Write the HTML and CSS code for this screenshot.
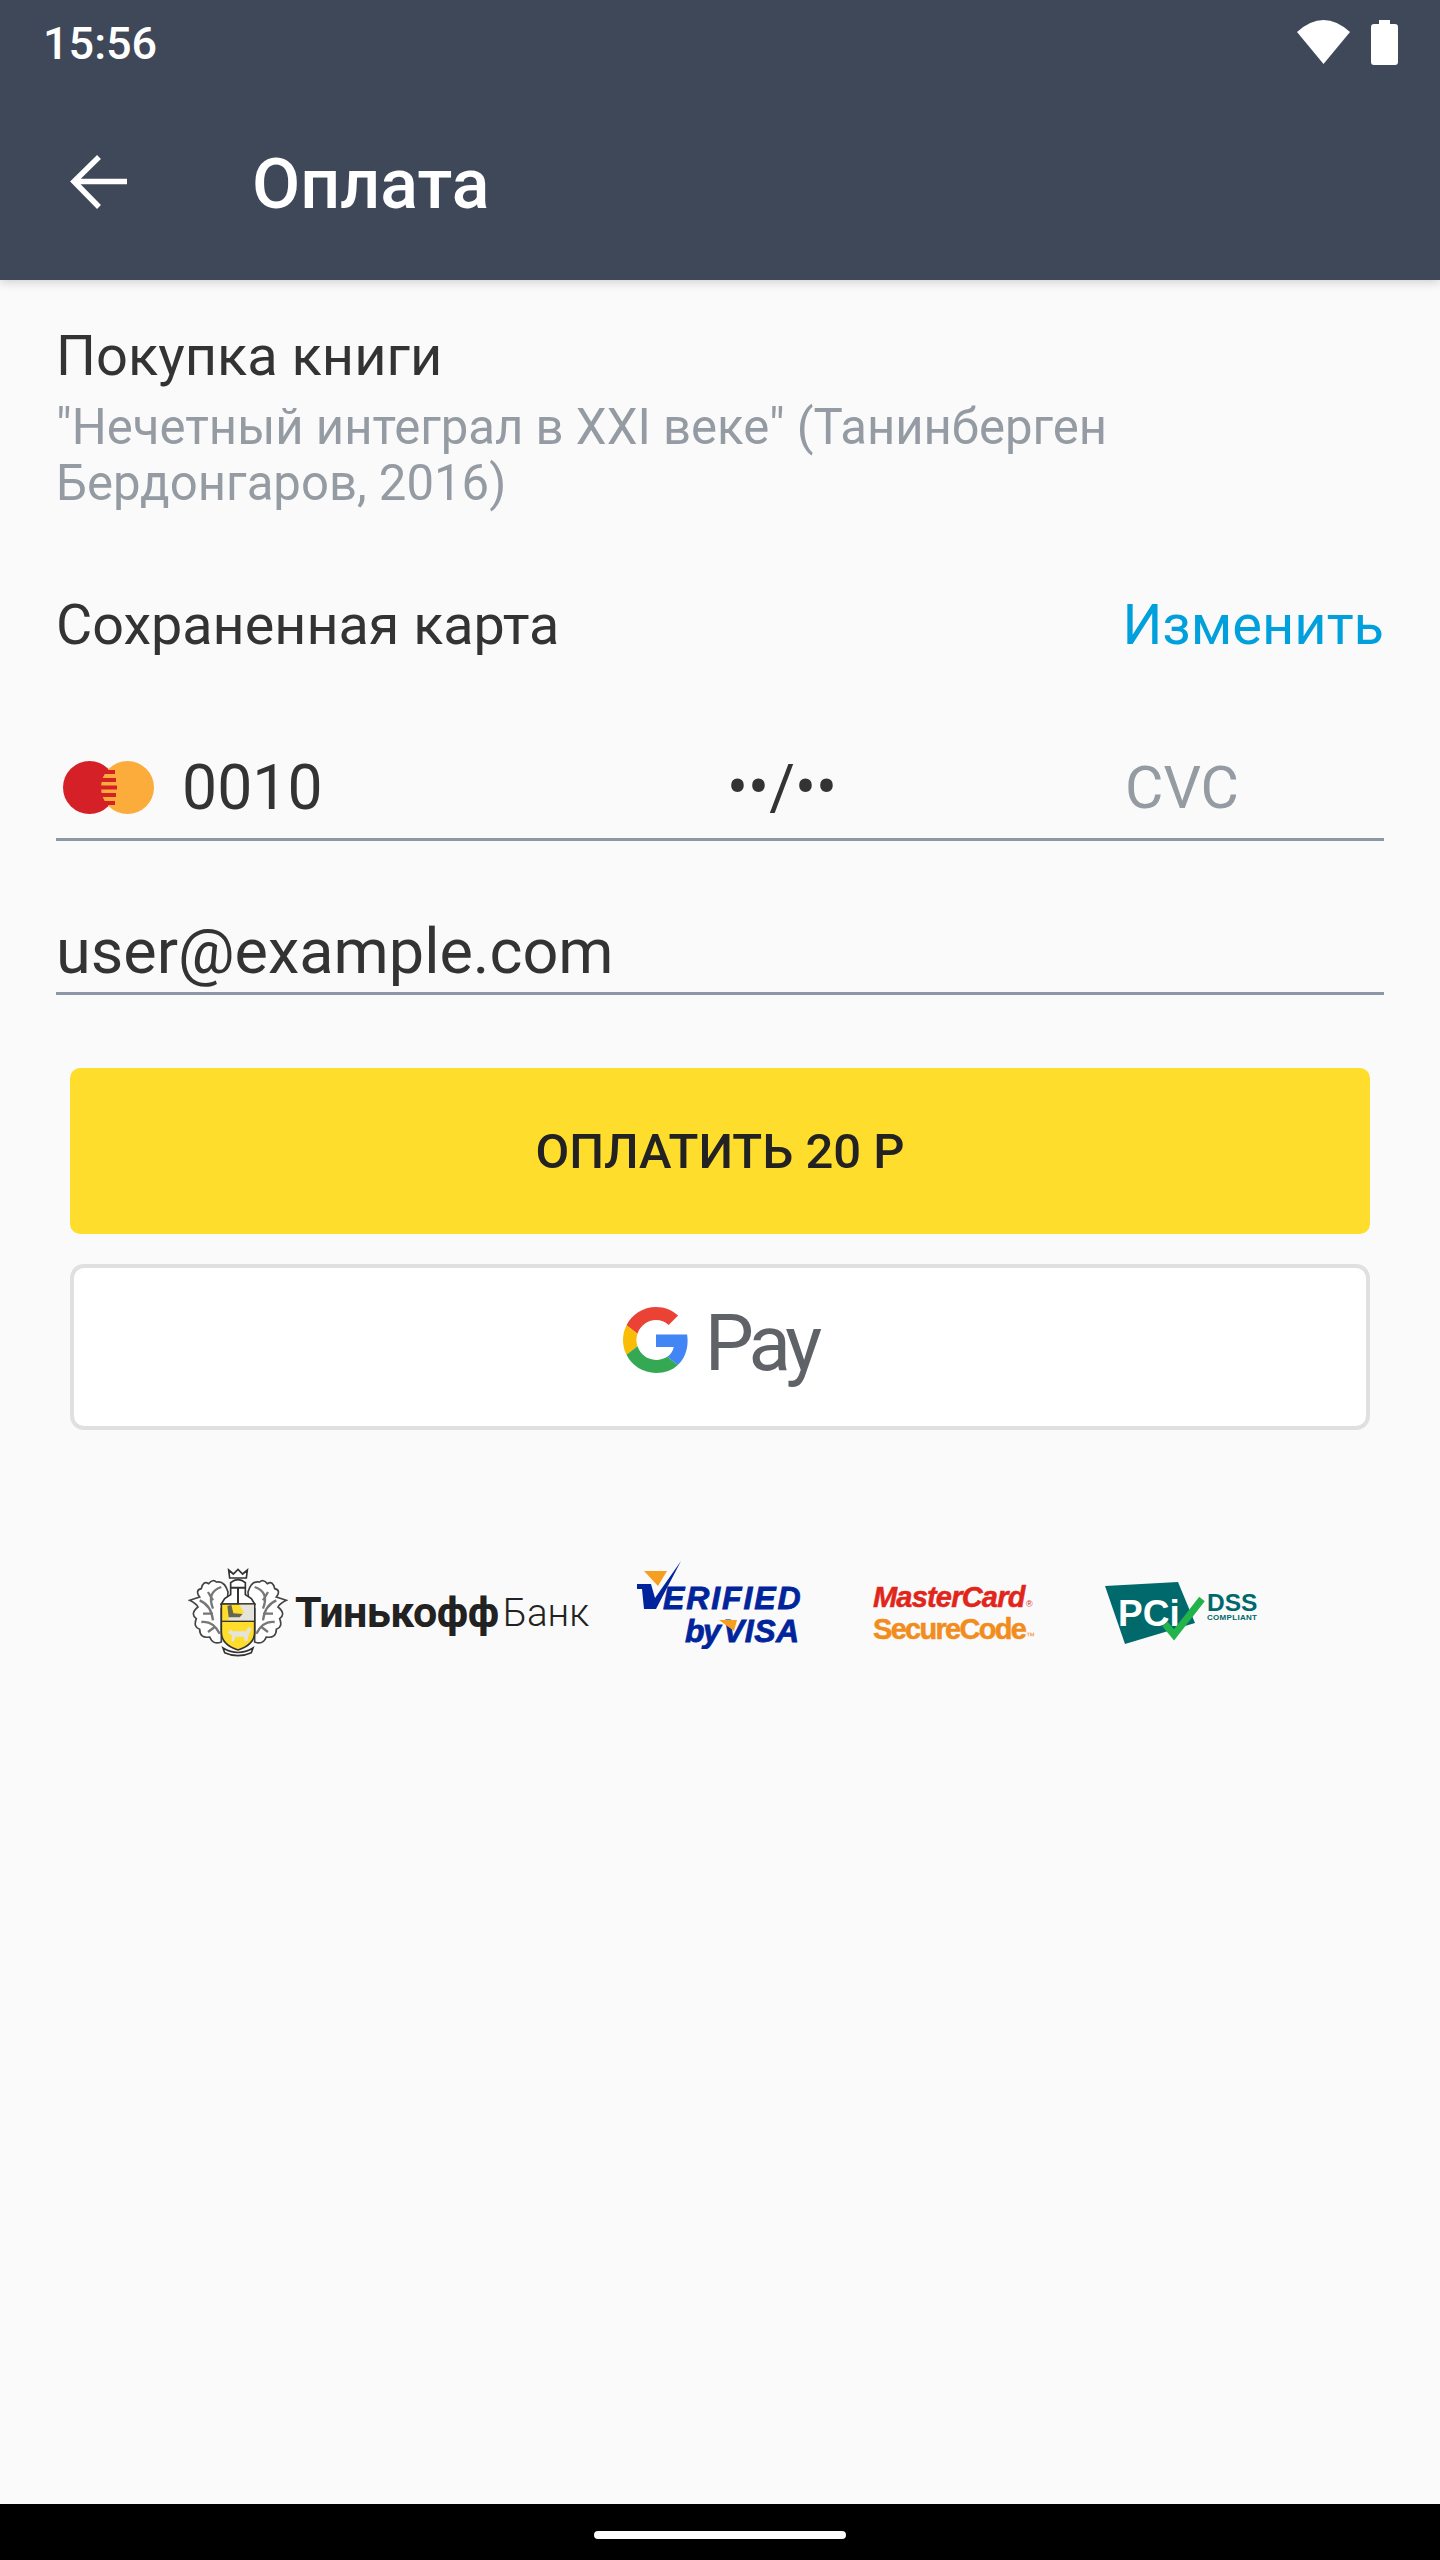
FILE: index.html
```html
<!DOCTYPE html>
<html lang="ru">
<head>
    <meta charset="UTF-8">
    <meta name="viewport" content="width=device-width, initial-scale=1.0">
    <title>Оплата</title>
    <link rel="stylesheet" href="styles.css">
</head>
<body>
    <div class="screen">
        <header class="header">
            <div class="status-bar">
                <span class="status-time">15:56</span>
                <div class="status-icons">
                    <svg class="icon-wifi" viewBox="0 0 53 44"><path d="M0 12Q26.500 -12 53 12L26.500 44Z"/></svg>
                    <svg class="icon-battery" viewBox="0 0 27 45"><path d="M8 0H19V4H24Q27 4 27 7V42Q27 45 24 45H3Q0 45 0 42V7Q0 4 3 4H8Z"/></svg>
                </div>
            </div>
            <div class="toolbar">
                <svg class="icon-back" viewBox="0 0 58 54"><path d="M57 26.500H5M29 2L4 26.500L29 52"/></svg>
                <h1 class="toolbar-title">Оплата</h1>
            </div>
        </header>

        <main class="content">
            <section class="purchase">
                <div class="purchase-title">Покупка книги</div>
                <div class="purchase-desc">"Нечетный интеграл в XXI веке" (Танинберген Бердонгаров, 2016)</div>
            </section>

            <div class="saved-row">
                <span>Сохраненная карта</span>
                <a class="saved-link">Изменить</a>
            </div>

            <div class="field card-field">
                <svg class="icon-mc" viewBox="0 0 91 53">
                    <circle class="mc-red" cx="26.500" cy="26.500" r="26.500"/>
                    <circle class="mc-orange" cx="64.500" cy="26.500" r="26.500"/>
                    <path class="mc-stripes" d="M40 11H52M38 19H53M37 26.500H54M38 34H53M40 42H52"/>
                </svg>
                <span class="card-number">0010</span>
                <span class="card-date">••/••</span>
                <span class="card-cvc">CVC</span>
            </div>

            <div class="field email-field">user@example.com</div>

            <div class="actions">
                <button class="btn btn-pay">ОПЛАТИТЬ 20 Р</button>
                <button class="btn btn-gpay">
                    <svg class="icon-g" viewBox="0 0 48 48">
                        <path fill="#EA4335" d="M24 9.500c3.540 0 6.710 1.220 9.210 3.600l6.850-6.850C35.900 2.380 30.470 0 24 0 14.620 0 6.510 5.380 2.560 13.220l7.980 6.190C12.430 13.720 17.740 9.500 24 9.500z"/>
                        <path fill="#4285F4" d="M46.980 24.550c0-1.570-.15-3.090-.38-4.550H24v9.020h12.940c-.58 2.960-2.260 5.480-4.780 7.180l7.730 6c4.510-4.180 7.090-10.360 7.090-17.650z"/>
                        <path fill="#FBBC05" d="M10.530 28.590c-.48-1.450-.76-2.990-.76-4.590s.27-3.140.76-4.590l-7.980-6.190C.92 16.460 0 20.120 0 24c0 3.880.92 7.540 2.560 10.780l7.970-6.190z"/>
                        <path fill="#34A853" d="M24 48c6.480 0 11.930-2.130 15.890-5.810l-7.730-6c-2.150 1.450-4.920 2.300-8.160 2.300-6.260 0-11.570-4.220-13.470-9.910l-7.980 6.190C6.510 42.620 14.620 48 24 48z"/>
                    </svg>
                    <span class="gpay-text">Pay</span>
                </button>
            </div>

            <div class="logos">
                <div class="logo-tinkoff">
                    <svg class="crest" viewBox="50 75 300 270">
                        <g class="crest-leaf">
                            <path d="M170 150Q160 115 135 120Q125 110 112 125Q95 115 90 140Q70 145 85 165L55 175Q75 185 80 195Q55 215 75 230Q65 255 85 262Q85 290 115 285Q125 310 150 300V200Q170 180 170 150Z"/>
                            <path class="crest-vein" d="M150 135Q105 150 125 200M85 175Q120 190 125 235M90 240Q125 235 145 275M110 150L125 175M95 215L125 215M110 270L130 255"/>
                        </g>
                        <g class="crest-leaf" transform="matrix(-1 0 0 1 400 0)">
                            <path d="M170 150Q160 115 135 120Q125 110 112 125Q95 115 90 140Q70 145 85 165L55 175Q75 185 80 195Q55 215 75 230Q65 255 85 262Q85 290 115 285Q125 310 150 300V200Q170 180 170 150Z"/>
                            <path class="crest-vein" d="M150 135Q105 150 125 200M85 175Q120 190 125 235M90 240Q125 235 145 275M110 150L125 175M95 215L125 215M110 270L130 255"/>
                        </g>
                        <path class="crest-crown" d="M172 84L186 96L200 82L214 96L228 84L225 108H175Z"/>
                        <path class="crest-knight" d="M178 122Q200 104 222 122V158L240 170L250 186H150L160 170L178 158Z"/>
                        <path class="crest-line" d="M178 137H222M200 137V186"/>
                        <path class="crest-shield" d="M150 186H250V270Q250 308 200 324Q150 308 150 270Z"/>
                        <path class="crest-white" d="M204 188H248V236H172V222Q205 226 218 212Z"/>
                        <path class="crest-dark" d="M168 192L180 188L186 214L214 216L205 226L172 226Z"/>
                        <path class="crest-band" d="M152 238H248"/>
                        <path class="crest-white" d="M170 272Q176 258 184 268H224L232 254L240 260L232 278L228 298H220L218 284H192L188 298H180L182 280Z"/>
                        <path class="crest-ribbon" d="M155 318Q200 345 245 318L240 332Q200 350 160 332Z"/>
                    </svg>
                    <span class="tinkoff-name">Тинькофф</span>
                    <span class="tinkoff-bank">Банк</span>
                </div>

                <svg class="logo-visa" viewBox="0 0 165 88">
                    <path class="visa-orange" d="M7 10H30L21 25Z"/>
                    <path class="visa-blue" d="M0 23H14L18 37L44 0L19 48H7L5 28H0Z"/>
                    <text class="visa-verified" x="26" y="48">ERIFIED</text>
                    <text class="visa-by" x="48" y="81">by</text>
                    <text class="visa-word" x="86" y="81">VISA</text>
                    <path class="visa-orange" d="M82 59H100L97 70Z"/>
                </svg>

                <svg class="logo-securecode" viewBox="0 0 190 68">
                    <text class="sc-master" x="4" y="28">MasterCard</text>
                    <text class="sc-reg" x="157" y="28">®</text>
                    <text class="sc-secure" x="4" y="60">SecureCode</text>
                    <text class="sc-tm" x="157" y="60">™</text>
                </svg>

                <svg class="logo-pci" viewBox="0 0 153 64">
                    <path class="pci-plate" d="M0 5L73 1L90 42L20 63Z"/>
                    <text class="pci-word" x="13" y="45">PCi</text>
                    <path class="pci-check" d="M60 43L69 54L97 18"/>
                    <text class="pci-dss" x="102" y="30">DSS</text>
                    <text class="pci-small" x="102" y="39">COMPLIANT</text>
                </svg>
            </div>
        </main>

        <footer class="nav-bar"><div class="nav-pill"></div></footer>
    </div>
</body>
</html>
```

FILE: styles.css
```css
:root {
    --header: #3f4859;
    --bg: #fafafa;
    --text: #333333;
    --muted: #959ba3;
    --line: #8e98a4;
    --link: #00a0dc;
    --yellow: #ffdd2d;
}

* {
    box-sizing: border-box;
}

html, body {
    margin: 0;
    padding: 0;
}

body {
    font-family: Roboto, 'Noto Sans', sans-serif;
    color: var(--text);
    background-color: var(--bg);
}

.screen {
    display: flex;
    flex-direction: column;
    height: 2560px;
}

.header {
    height: 280px;
    background: var(--header);
    color: white;
    box-shadow: 0 2px 10px rgba(0, 0, 0, 0.18);
    position: relative;
    z-index: 1;
}

.status-bar {
    display: flex;
    justify-content: space-between;
    align-items: center;
    height: 84px;
    padding: 0 42px 0 43px;
}

.status-time {
    font-size: 45px;
    font-weight: 500;
    margin-top: 2px;
}

.status-icons {
    display: flex;
    align-items: center;
    gap: 21px;
}

.icon-wifi {
    width: 53px;
    height: 44px;
    fill: white;
}

.icon-battery {
    width: 27px;
    height: 45px;
    fill: white;
}

.toolbar {
    display: flex;
    align-items: center;
    height: 196px;
    padding-left: 70px;
}

.icon-back {
    width: 58px;
    height: 54px;
    fill: none;
    stroke: white;
    stroke-width: 5.500px;
    margin-right: 124px;
}

.toolbar-title {
    margin: 4px 0 0;
    font-size: 70px;
    font-weight: 500;
}

.content {
    flex: 1;
    padding: 0 56px;
}

.purchase {
    padding-top: 41px;
}

.purchase-title {
    font-size: 56px;
    line-height: 70px;
    margin-bottom: 8px;
}

.purchase-desc {
    font-size: 49.100px;
    line-height: 56px;
    color: var(--muted);
    width: 1150px;
}

.saved-row {
    display: flex;
    justify-content: space-between;
    align-items: center;
    margin-top: 79px;
    font-size: 55.700px;
    line-height: 70px;
}

.saved-link {
    color: var(--link);
    font-size: 56px;
}

.field {
    border-bottom: 3px solid var(--line);
    font-size: 62.500px;
}

.card-field {
    display: flex;
    align-items: center;
    height: 98px;
    margin-top: 83px;
    padding: 0 0 6px 7px;
}

.icon-mc {
    width: 91px;
    height: 53px;
    margin-right: 28px;
}

.mc-red {
    fill: #d62027;
}

.mc-orange {
    fill: #fbac3a;
}

.mc-stripes {
    stroke: #d62027;
    stroke-width: 4px;
}

.card-number {
    width: 545px;
}

.card-date {
    width: 398px;
}

.card-cvc {
    color: var(--muted);
    font-size: 59px;
}

.email-field {
    height: 86px;
    margin-top: 68px;
    font-size: 63px;
    line-height: 85px;
}

.actions {
    display: flex;
    flex-direction: column;
    gap: 30px;
    margin: 73px 14px 0;
}

.btn {
    display: flex;
    align-items: center;
    justify-content: center;
    width: 100%;
    height: 166px;
    border-radius: 10px;
    font-family: inherit;
}

.btn-pay {
    border: none;
    background: var(--yellow);
    color: #222222;
    font-size: 49px;
    font-weight: 500;
}

.btn-gpay {
    border: 4px solid #e0e0e0;
    border-radius: 14px;
    background: white;
    gap: 16px;
    padding-bottom: 15px;
}

.icon-g {
    width: 66px;
    height: 66px;
}

.gpay-text {
    font-size: 78px;
    line-height: 1;
    color: #5f6368;
    letter-spacing: -5px;
    margin-top: 8px;
}

.logos {
    display: flex;
    align-items: flex-start;
    margin: 131px 0 0 132px;
}

.logo-tinkoff {
    display: flex;
    align-items: center;
    width: 403px;
    margin-top: 6px;
    flex-shrink: 0;
}

.crest {
    width: 100px;
    height: 90px;
    margin-right: 7px;
    flex-shrink: 0;
}

.crest-leaf path {
    fill: white;
    stroke: #444444;
    stroke-width: 5px;
}

.crest-leaf .crest-vein {
    fill: none;
    stroke: #777777;
    stroke-width: 7px;
}

.crest-crown, .crest-knight, .crest-ribbon {
    fill: white;
    stroke: #333333;
    stroke-width: 5px;
}

.crest-line {
    fill: none;
    stroke: #333333;
    stroke-width: 6px;
}

.crest-shield {
    fill: var(--yellow);
    stroke: #333333;
    stroke-width: 5px;
}

.crest-white {
    fill: #e4e4dc;
}

.crest-dark {
    fill: #666650;
}

.crest-band {
    stroke: #333333;
    stroke-width: 4px;
}

.tinkoff-name {
    font-size: 43px;
    font-weight: 700;
    color: #222222;
    letter-spacing: -0.500px;
}

.tinkoff-bank {
    font-size: 38.500px;
    font-weight: 300;
    color: #222222;
    margin-left: 4px;
}

.logo-visa {
    width: 165px;
    height: 88px;
    margin-left: 46px;
    flex-shrink: 0;
}

.visa-blue {
    fill: #00249c;
}

.visa-orange {
    fill: #f59e1f;
}

.visa-verified, .visa-by, .visa-word {
    font-family: 'Liberation Sans', sans-serif;
    font-style: italic;
    font-weight: 700;
    font-size: 32px;
    fill: #00249c;
    stroke: #00249c;
    stroke-width: 0.800px;
}

.visa-verified {
    letter-spacing: 1.900px;
}

.visa-by {
    letter-spacing: -1.500px;
}

.visa-word {
    letter-spacing: 0.500px;
}

.logo-securecode {
    width: 190px;
    height: 68px;
    margin: 18px 0 0 67px;
    flex-shrink: 0;
}

.sc-master, .sc-secure {
    font-family: 'Liberation Sans', sans-serif;
    font-weight: 700;
    font-size: 29px;
}

.sc-master {
    fill: #e1251b;
    stroke: #e1251b;
    stroke-width: 0.500px;
    font-style: italic;
    letter-spacing: -0.800px;
}

.sc-secure {
    fill: #f28c1c;
    stroke: #f28c1c;
    stroke-width: 0.500px;
    letter-spacing: -1.700px;
}

.sc-reg, .sc-tm {
    font-family: 'Liberation Sans', sans-serif;
    font-size: 9px;
}

.sc-reg {
    fill: #e1251b;
}

.sc-tm {
    fill: #f28c1c;
}

.logo-pci {
    width: 153px;
    height: 64px;
    margin: 20px 0 0 46px;
    flex-shrink: 0;
}

.pci-plate {
    fill: #00696b;
}

.pci-word {
    font-family: 'Liberation Sans', sans-serif;
    font-weight: 700;
    font-size: 37px;
    fill: white;
}

.pci-check {
    fill: none;
    stroke: #22b34b;
    stroke-width: 7px;
}

.pci-dss {
    font-family: 'Liberation Sans', sans-serif;
    font-weight: 700;
    font-size: 24.500px;
    fill: #00696b;
}

.pci-small {
    font-family: 'Liberation Sans', sans-serif;
    font-weight: 700;
    font-size: 8px;
    letter-spacing: 0.300px;
    fill: #00696b;
}

.nav-bar {
    display: flex;
    justify-content: center;
    height: 56px;
    padding-top: 27px;
    background: black;
}

.nav-pill {
    width: 252px;
    height: 8px;
    border-radius: 4px;
    background: white;
}
```
